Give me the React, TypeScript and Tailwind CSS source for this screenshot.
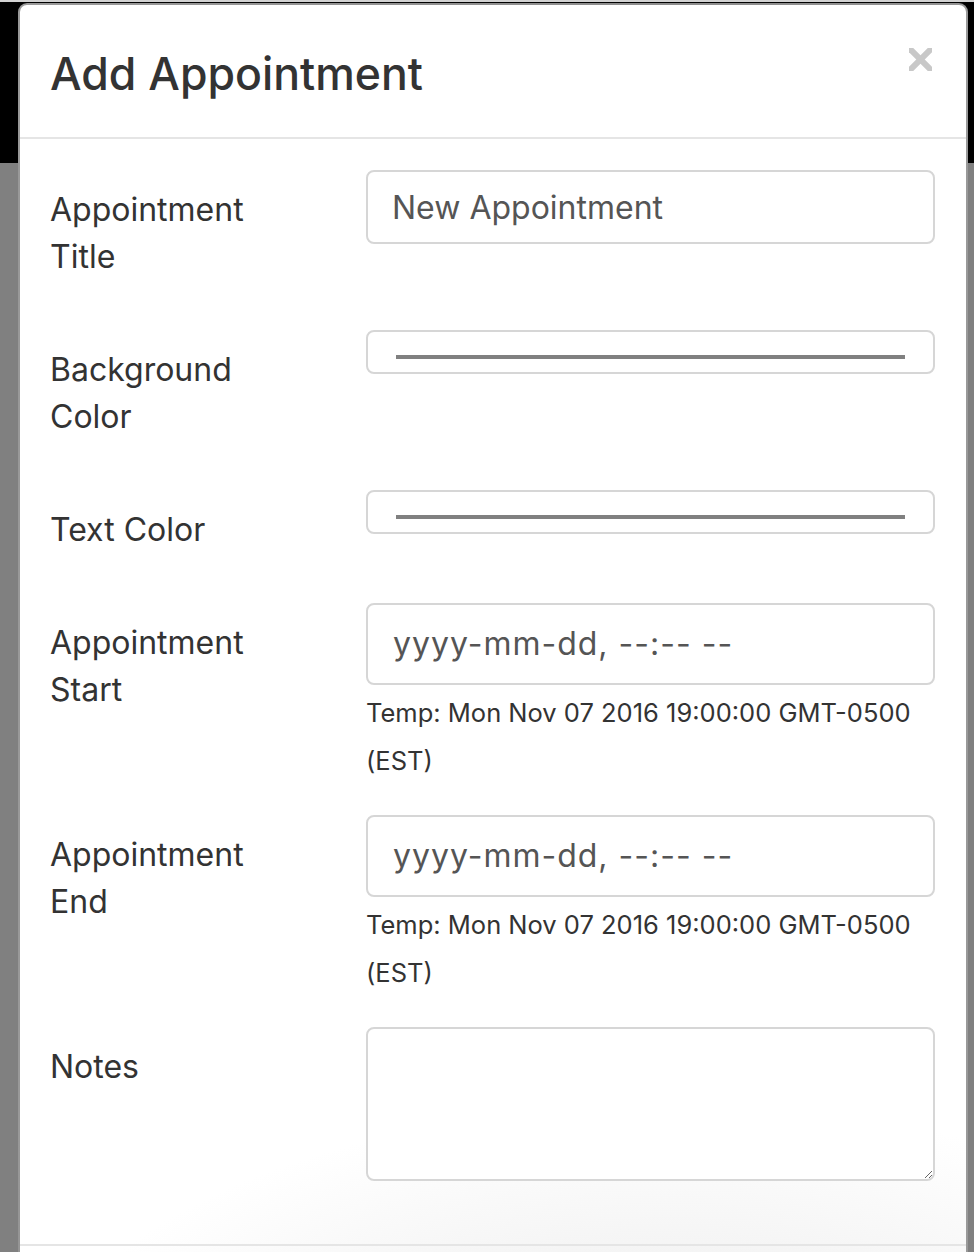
import React from 'react';

const rows = [
  { label: ['Appointment', 'Title'], kind: 'text' },
  { label: ['Background', 'Color'], kind: 'color' },
  { label: ['Text Color'], kind: 'color' },
  { label: ['Appointment', 'Start'], kind: 'date' },
  { label: ['Appointment', 'End'], kind: 'date' },
  { label: ['Notes'], kind: 'notes' },
];

const fieldBox = 'w-full border-2 border-[#d6d6d6] rounded-[8px] bg-white';

const Field: React.FC<{ kind: string }> = ({ kind }) => {
  if (kind === 'text') {
    return (
      <input
        defaultValue="New Appointment"
        className={`${fieldBox} h-[74px] pl-[24px] text-[32px] text-[#555] outline-none`}
      />
    );
  }
  if (kind === 'color') {
    return (
      <div className={`${fieldBox} h-[44px] px-[28px] pt-[23px]`}>
        <div className="h-[4px] bg-[#808080]" />
      </div>
    );
  }
  if (kind === 'date') {
    return (
      <div>
        <div className={`${fieldBox} h-[82px] pl-[25px] flex items-center text-[32px] tracking-[1px] text-[#555]`}>
          yyyy-mm-dd, --:-- --
        </div>
        <p className="mt-1 text-[25.5px] leading-[48px] text-[#333]">
          Temp: Mon Nov 07 2016 19:00:00 GMT-0500 (EST)
        </p>
      </div>
    );
  }
  return <textarea className={`${fieldBox} h-[154px] block resize-y outline-none`} />;
};

export default function App() {
  return (
    <div className="relative h-[1252px] overflow-hidden bg-[#808080] font-['Inter','Noto_Sans',sans-serif]">
      {/* page behind the backdrop */}
      <div className="h-[2px] bg-[#d2d2d2]" />
      <div className="h-[161px] bg-black" />

      {/* modal */}
      <div className="absolute left-[18px] top-[3px] w-[950px] h-[1400px] rounded-[9px] border-2 border-black/40 bg-white bg-[radial-gradient(ellipse_640px_300px_at_650px_1400px,#e9e9e9_0%,#ffffff_100%)] overflow-hidden">
        {/* header */}
        <div className="flex justify-between items-start border-b-2 border-[#e5e5e5] pl-[30px] pr-[34px] pt-[44px] pb-[38px]">
          <h4 className="text-[44.6px] leading-[50px] font-medium text-[#333]">Add Appointment</h4>
          <button className="mt-[-1px] focus:outline-none">
            <svg width="23" height="23" viewBox="0 0 23 23">
              <line x1="0" y1="0" x2="23" y2="23" stroke="#c8c8c8" strokeWidth="6" />
              <line x1="23" y1="0" x2="0" y2="23" stroke="#c8c8c8" strokeWidth="6" />
            </svg>
          </button>
        </div>

        {/* body */}
        <div className="pl-[30px] pr-[31px] pt-[31px] pb-[63px]">
          {rows.map((row, i) => (
            <div
              key={i}
              className={`grid grid-cols-[316px_1fr] ${
                i === 3 || i === 4 ? 'mb-[30px]' : i === 5 ? 'mb-0' : 'mb-[50px]'
              }`}
            >
              <label className="pt-[16px] text-[32px] leading-[47px] text-[#333]">
                {row.label.map((line) => (
                  <span key={line} className="block">{line}</span>
                ))}
              </label>
              <Field kind={row.kind} />
            </div>
          ))}
        </div>

        {/* footer */}
        <div className="border-t-2 border-[#e5e5e5] h-[80px]" />
      </div>
    </div>
  );
}
